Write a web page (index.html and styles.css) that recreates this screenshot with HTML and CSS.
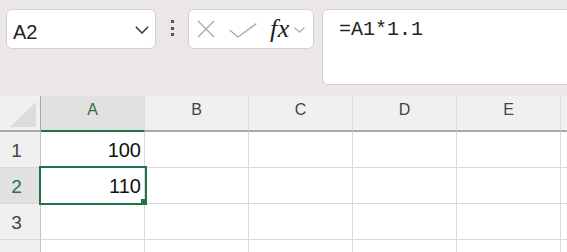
FILE: index.html
```html
<!DOCTYPE html>
<html>
<head>
<meta charset="utf-8">
<link rel="stylesheet" href="styles.css">
</head>
<body>
<div class="toolbar">
  <div class="namebox">
    <span class="name">A2</span>
    <svg class="nb-chev" width="14" height="8" viewBox="0 0 14 8"><path d="M0.8 0.8 L7 7 L13.2 0.8" fill="none" stroke="#333" stroke-width="1.5"/></svg>
  </div>
  <div class="dots"><i></i><i></i><i></i></div>
  <div class="fxbox">
    <svg class="ic-x" width="18" height="18" viewBox="0 0 18 18"><path d="M1 1 L17 17 M17 1 L1 17" fill="none" stroke="#a8a8a8" stroke-width="1.3"/></svg>
    <svg class="ic-check" width="28" height="15" viewBox="0 0 28 15"><path d="M0.6 7 L9 14 L27.4 0.6" fill="none" stroke="#a8a8a8" stroke-width="1.3"/></svg>
    <span class="fx">fx</span>
    <svg class="fx-chev" width="11" height="6" viewBox="0 0 11 6"><path d="M0.6 0.6 L5.5 5.2 L10.4 0.6" fill="none" stroke="#a8a8a8" stroke-width="1.2"/></svg>
  </div>
  <div class="formula">=A1*1.1</div>
</div>
<div class="sheet">
  <div class="corner"><span class="tri"></span></div>
  <div class="colh sel">A</div>
  <div class="colh">B</div>
  <div class="colh">C</div>
  <div class="colh">D</div>
  <div class="colh">E</div>
  <div class="colh"></div>

  <div class="rowh">1</div>
  <div class="cell num">100</div>
  <div class="cell"></div><div class="cell"></div><div class="cell"></div><div class="cell"></div><div class="cell"></div>

  <div class="rowh sel">2</div>
  <div class="cell num active">110<span class="selbox"></span><span class="handle"></span></div>
  <div class="cell"></div><div class="cell"></div><div class="cell"></div><div class="cell"></div><div class="cell"></div>

  <div class="rowh">3</div>
  <div class="cell"></div><div class="cell"></div><div class="cell"></div><div class="cell"></div><div class="cell"></div><div class="cell"></div>

  <div class="rowh"></div>
  <div class="cell"></div><div class="cell"></div><div class="cell"></div><div class="cell"></div><div class="cell"></div><div class="cell"></div>
</div>
</body>
</html>
```

FILE: styles.css
```css
* { box-sizing: border-box; }
html, body {
  margin: 0;
  padding: 0;
  width: 567px;
  height: 252px;
  overflow: hidden;
  background: #ffffff;
  font-family: "Liberation Sans", Arial, sans-serif;
}
.toolbar {
  width: 567px;
  height: 96px;
  background: #ebe7e7;
  display: flex;
  align-items: flex-start;
  padding: 9px 0 0 6px;
  overflow: hidden;
}
.namebox {
  flex: none;
  width: 150px;
  height: 40px;
  background: #fff;
  border: 1px solid #d2d0d0;
  border-radius: 6px;
  display: flex;
  align-items: center;
  justify-content: space-between;
  padding: 6px 6px 0 6px;
}
.name {
  font-size: 20px;
  line-height: 20px;
  color: #222;
}
.nb-chev { margin-top: -4px; }
.dots {
  flex: none;
  width: 32px;
  height: 40px;
  display: flex;
  flex-direction: column;
  align-items: center;
  padding-top: 11px;
  gap: 3.5px;
}
.dots i {
  display: block;
  width: 3px;
  height: 3px;
  background: #555;
}
.fxbox {
  flex: none;
  width: 126px;
  height: 40px;
  background: #fff;
  border: 1px solid #d2d0d0;
  border-radius: 6px;
  display: flex;
  align-items: center;
  padding-left: 8px;
}
.ic-x { flex: none; }
.ic-check { flex: none; margin-left: 14px; margin-top: 2px; }
.fx {
  margin-left: 13px;
  font-family: "Liberation Serif", "Times New Roman", serif;
  font-style: italic;
  font-size: 26px;
  line-height: 20px;
  color: #222;
  letter-spacing: 0.5px;
}
.fx-chev { margin-left: 4px; margin-top: 2px; }
.formula {
  flex: none;
  margin-left: 8px;
  width: 280px;
  height: 76px;
  background: #fff;
  border: 1px solid #d2d0d0;
  border-radius: 6px;
  font-family: "Liberation Mono", "Courier New", monospace;
  font-size: 20px;
  line-height: 20px;
  padding: 10px 0 0 16px;
  color: #222;
}
.sheet {
  width: 567px;
  height: 156px;
  overflow: hidden;
  display: grid;
  grid-template-columns: 41px repeat(6, 104px);
  grid-template-rows: 36px repeat(4, 36px);
}
.corner {
  background: #f0f0f0;
  border-right: 1px solid #a8a8a8;
  border-bottom: 2px solid #a8a8a8;
  position: relative;
}
.tri {
  position: absolute;
  left: 10px;
  top: 6px;
  width: 0;
  height: 0;
  border-left: 26px solid transparent;
  border-bottom: 25px solid #dcdcdc;
}
.colh {
  background: #f0f0f0;
  border-right: 1px solid #dcdcdc;
  border-bottom: 2px solid #a8a8a8;
  display: flex;
  align-items: center;
  justify-content: center;
  font-size: 16px;
  color: #444;
  padding-bottom: 6px;
}
.colh.sel {
  background: #e1e1e1;
  border-bottom-color: #217346;
  color: #2a6e45;
}
.rowh {
  background: #f0f0f0;
  border-right: 1px solid #c4c4c4;
  border-bottom: 1px solid #d8d8d8;
  display: flex;
  align-items: center;
  justify-content: center;
  font-size: 19px;
  color: #444;
  padding-right: 7px;
  padding-top: 2px;
}
.rowh.sel {
  background: #e1e1e1;
  color: #217346;
}
.cell {
  border-right: 1px solid #dadada;
  border-bottom: 1px solid #dadada;
  background: #fff;
}
.num {
  display: flex;
  align-items: center;
  justify-content: flex-end;
  font-size: 20px;
  color: #111;
  padding-right: 3px;
  padding-top: 1px;
}
.active { position: relative; }
.selbox {
  position: absolute;
  left: -2px;
  top: -2px;
  right: -3px;
  bottom: -2px;
  border: 2px solid #217346;
}
.handle {
  position: absolute;
  right: -3px;
  bottom: -2px;
  width: 6px;
  height: 6px;
  background: #217346;
}
```
